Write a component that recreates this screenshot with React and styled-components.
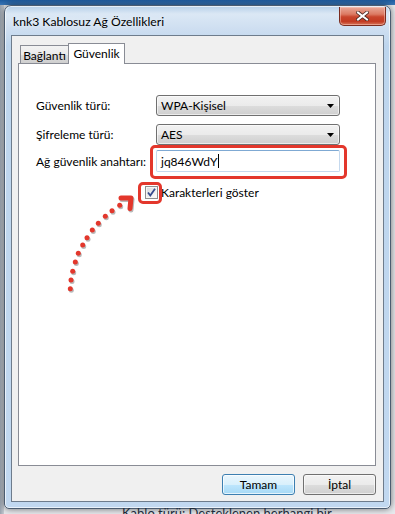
import React from "react";
import styled, { createGlobalStyle, css } from "styled-components";

const FONT = `Lato, "Noto Sans", sans-serif`;

const Global = createGlobalStyle`
  html, body { margin: 0; padding: 0; }
  body { font-family: ${FONT}; font-size: 12px; color: #000; }
  * { box-sizing: border-box; }
`;

const Desktop = styled.div`
  width: 395px;
  height: 514px;
  overflow: hidden;
  padding: 5px 4px 0 4px;
  background:
    linear-gradient(to bottom, #1f5c9f 0px, #3a78ba 5px, rgba(0,0,0,0) 5px),
    linear-gradient(to right, #9aa4b0 0px, #c9ced5 4px, #e8eaee 4px);
`;

const Window = styled.div`
  width: 387px;
  height: 504px;
  display: flex;
  flex-direction: column;
  border: 1px solid #4b5c70;
  border-radius: 7px 7px 5px 5px;
  background: linear-gradient(to bottom, #b6cfe9 0px, #dbe8f5 8px, #cfdff1 22px, #bdd5ed 40px, #c1d8f0 100%);
  box-shadow: 0 0 7px rgba(0, 0, 0, 0.55), inset 0 0 0 1px rgba(255, 255, 255, 0.65);
`;

const TitleBar = styled.div`
  height: 29px;
  display: flex;
  justify-content: space-between;
  align-items: flex-start;
  padding: 0 4px 0 8px;
`;

const Title = styled.div`
  font-family: ${FONT};
  font-size: 12.2px;
  line-height: 16px;
  margin-top: 8px;
  color: #000;
  text-shadow: 0 0 6px rgba(255, 255, 255, 0.9);
`;

const CloseButton = styled.div`
  width: 47px;
  height: 19px;
  margin-top: 1px;
  display: flex;
  align-items: center;
  justify-content: center;
  border: 1px solid #7a2c1f;
  border-top: none;
  border-radius: 0 0 5px 5px;
  background: linear-gradient(to bottom, #e9a999 0%, #dc7a63 40%, #c9452c 55%, #c23a22 80%, #d7765a 100%);
  box-shadow: inset 0 0 0 1px rgba(255, 210, 200, 0.45);
`;

const Body = styled.div`
  flex: 1;
  display: flex;
  padding: 0 6px 6px 6px;
`;

const Client = styled.div`
  flex: 1;
  display: flex;
  flex-direction: column;
  border: 1px solid #6e7c8c;
  background: #f0f0f0;
  padding: 7px 7px 6px 6px;
`;

const TabStrip = styled.div`
  height: 20px;
  display: flex;
  align-items: flex-end;
  padding-left: 2px;
`;

const Tab = styled.div`
  font-family: ${FONT};
  font-size: 12px;
  display: flex;
  justify-content: center;
  border: 1px solid #898c95;
  border-bottom: none;
  ${(p) =>
    p.$active
      ? css`
          height: 21px;
          margin-bottom: -1px;
          margin-left: -1px;
          width: 57px;
          padding-top: 2px;
          background: #fff;
          position: relative;
          z-index: 1;
        `
      : css`
          height: 18px;
          width: 49px;
          padding-top: 2px;
          background: linear-gradient(to bottom, #f3f3f3 0%, #ebebeb 50%, #dddddd 51%, #cfcfcf 100%);
        `}
`;

const Panel = styled.div`
  position: relative;
  height: 403px;
  border: 1px solid #898c95;
  background: #fff;
  padding: 31px 0 0 17px;
`;

const Form = styled.div`
  display: flex;
  flex-direction: column;
`;

const Row = styled.div`
  display: grid;
  grid-template-columns: 120px 184px;
  align-items: center;
  margin-top: ${(p) => p.$gap || 0}px;
`;

const Label = styled.div`
  font-family: ${FONT};
  font-size: 12px;
  white-space: nowrap;
`;

const Select = styled.div`
  position: relative;
  height: 21px;
  display: flex;
  align-items: center;
  justify-content: space-between;
  padding: 0 5px 0 4px;
  border: 1px solid #707070;
  border-radius: 3px;
  background: linear-gradient(to bottom, #f2f2f2 0%, #ebebeb 50%, #dddddd 51%, #cfcfcf 100%);
  box-shadow: inset 0 0 0 1px rgba(255, 255, 255, 0.6);
  font-family: ${FONT};
  font-size: 12px;
`;

const Highlighted = styled.div`
  position: relative;
  &::after {
    content: "";
    position: absolute;
    top: ${(p) => p.$t}px;
    left: ${(p) => p.$l}px;
    right: ${(p) => p.$r}px;
    bottom: ${(p) => p.$b}px;
    border: 3px solid #e3372c;
    border-radius: 5px;
    pointer-events: none;
  }
`;

const TextBox = styled.div`
  height: 22px;
  display: flex;
  align-items: center;
  padding-left: 4px;
  border: 1px solid #c5d9ee;
  border-top-color: #7fa9d3;
  border-radius: 2px;
  background: #fff;
  font-family: ${FONT};
  font-size: 12px;
`;

const Caret = styled.span`
  display: inline-block;
  width: 1px;
  height: 14px;
  margin-left: 1px;
  background: #000;
`;

const CheckRow = styled.div`
  display: flex;
  align-items: center;
  margin-left: -11px;
  gap: 3px;
`;

const CheckBox = styled.div`
  width: 13px;
  height: 13px;
  border: 1px solid #8e8f8f;
  background: linear-gradient(135deg, #d5d8dc 0%, #f4f4f4 70%, #ffffff 100%);
  box-shadow: inset 0 0 0 1px #f6f6f6;
  display: flex;
  align-items: center;
  justify-content: center;
`;

const Annotation = styled.svg`
  position: absolute;
  left: 40px;
  top: 125px;
  width: 100px;
  height: 110px;
  pointer-events: none;
`;

const ButtonRow = styled.div`
  display: flex;
  justify-content: flex-end;
  gap: 8px;
  margin-top: 8px;
`;

const Button = styled.div`
  width: 73px;
  height: 21px;
  display: flex;
  align-items: center;
  justify-content: center;
  border-radius: 3px;
  font-family: ${FONT};
  font-size: 12px;
  ${(p) =>
    p.$primary
      ? css`
          border: 1px solid #3c7fb1;
          background: linear-gradient(to bottom, #eaf6fd 0%, #d9f0fc 50%, #bee6fd 51%, #a7d9f5 100%);
          box-shadow: inset 0 0 0 1px rgba(255, 255, 255, 0.7);
        `
      : css`
          border: 1px solid #707070;
          background: linear-gradient(to bottom, #f2f2f2 0%, #ebebeb 50%, #dddddd 51%, #cfcfcf 100%);
          box-shadow: inset 0 0 0 1px rgba(255, 255, 255, 0.6);
        `}
`;

const DesktopText = styled.div`
  font-family: ${FONT};
  font-size: 13px;
  line-height: 14px;
  color: #1e2b3a;
  margin-top: -3px;
  padding-left: 118px;
  white-space: nowrap;
`;

const dots = [
  [69.3, 287.7], [70, 279], [71.7, 270.3], [74.3, 261], [77.3, 252.3], [81.7, 244],
  [86, 236.7], [91.3, 229], [97.3, 222.3], [104.3, 215.3], [111, 209.7], [118.7, 204.3],
];

function DropArrow() {
  return (
    <svg width="7" height="4" viewBox="0 0 7 4">
      <path d="M0 0 H7 L3.5 4 Z" fill="#000" />
    </svg>
  );
}

export default function App() {
  return (
    <>
      <Global />
      <Desktop>
        <Window>
          <TitleBar>
            <Title>knk3 Kablosuz Ağ Özellikleri</Title>
            <CloseButton>
              <svg width="13" height="10" viewBox="0 0 13 10">
                <path d="M2 1.5 L11 8.5 M11 1.5 L2 8.5" stroke="#4a2a24" strokeWidth="3.6" strokeLinecap="square" />
                <path d="M2 1.5 L11 8.5 M11 1.5 L2 8.5" stroke="#ffffff" strokeWidth="2" strokeLinecap="square" />
              </svg>
            </CloseButton>
          </TitleBar>
          <Body>
            <Client>
              <TabStrip>
                <Tab>Bağlantı</Tab>
                <Tab $active>Güvenlik</Tab>
              </TabStrip>
              <Panel>
                <Form>
                  <Row>
                    <Label>Güvenlik türü:</Label>
                    <Select>
                      <span>WPA-Kişisel</span>
                      <DropArrow />
                    </Select>
                  </Row>
                  <Row $gap={8}>
                    <Label>Şifreleme türü:</Label>
                    <Select>
                      <span>AES</span>
                      <DropArrow />
                    </Select>
                  </Row>
                  <Row $gap={5}>
                    <Label>Ağ güvenlik anahtarı:</Label>
                    <Highlighted $t={-5} $l={-6} $r={-7} $b={-7}>
                      <TextBox>
                        jq846WdY
                        <Caret />
                      </TextBox>
                    </Highlighted>
                  </Row>
                  <Row $gap={13}>
                    <span />
                    <CheckRow>
                      <Highlighted $t={-4} $l={-7} $r={-4} $b={-5}>
                        <CheckBox>
                          <svg width="11" height="11" viewBox="0 0 11 11">
                            <path d="M2 5.5 L4.3 8.5 L9 1.8" stroke="#354a8d" strokeWidth="1.8" fill="none" />
                          </svg>
                        </CheckBox>
                      </Highlighted>
                      <Label>Karakterleri göster</Label>
                    </CheckRow>
                  </Row>
                </Form>
                <Annotation viewBox="58 188 100 110">
                  {dots.map(([x, y], i) => (
                    <circle key={"s" + i} cx={x + 1} cy={y + 1.5} r="2.5" fill="#b9b9b9" />
                  ))}
                  <path d="M121 198.5 L131 198.5 L130 209" stroke="#b9b9b9" strokeWidth="5" fill="none" strokeLinecap="round" strokeLinejoin="round" />
                  {dots.map(([x, y], i) => (
                    <circle key={"d" + i} cx={x} cy={y} r="2.5" fill="#e3372c" />
                  ))}
                  <path d="M120 197 L130 197 L129 207.5" stroke="#e3372c" strokeWidth="5" fill="none" strokeLinecap="round" strokeLinejoin="round" />
                </Annotation>
              </Panel>
              <ButtonRow>
                <Button $primary>Tamam</Button>
                <Button>İptal</Button>
              </ButtonRow>
            </Client>
          </Body>
        </Window>
        <DesktopText>Kablo türü: Desteklenen herhangi bir</DesktopText>
      </Desktop>
    </>
  );
}
